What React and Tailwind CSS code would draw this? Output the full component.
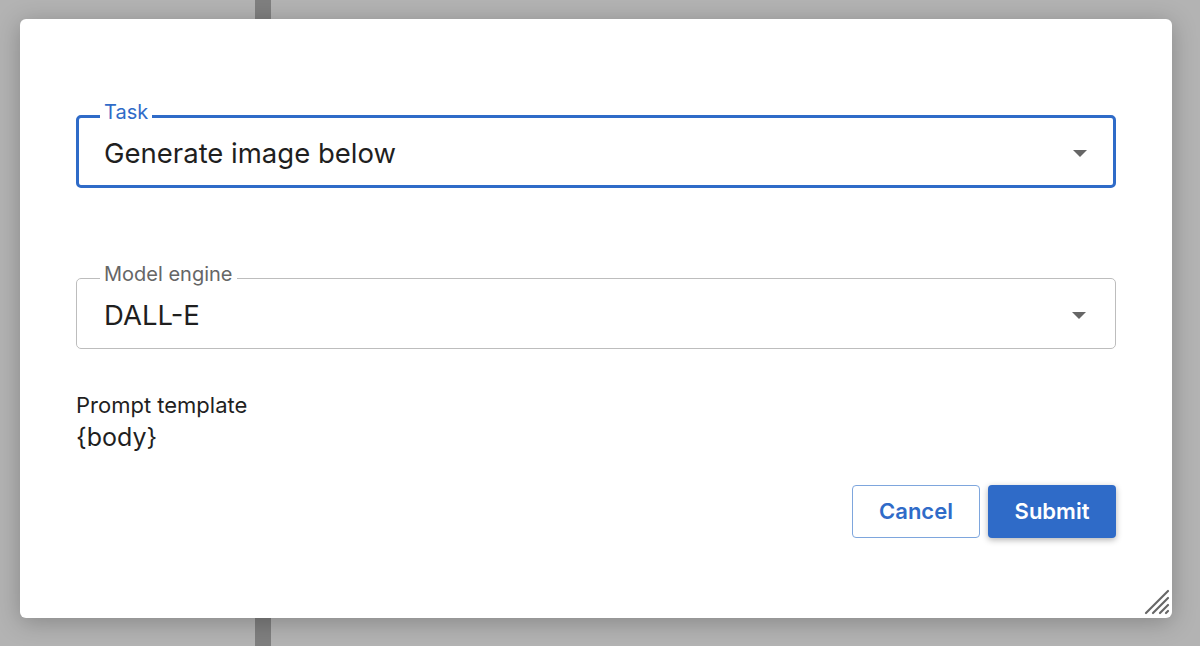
import { useState } from "react";

const font = { fontFamily: "Inter, 'Noto Sans', sans-serif" };

// MUI-style outlined select, drawn with a fieldset so the label sits in the notch
const OutlinedSelect = ({ label, value, focused }) => (
  <fieldset
    className={
      focused
        ? "rounded-[5px] border-[3px] border-[#2f6bc8] px-[21px]"
        : "rounded-[5px] border border-[#bdbdbd] px-[23px]"
    }
  >
    <legend
      className={
        focused
          ? "px-[4px] text-[20px] leading-[20px] text-[#2f6bc8]"
          : "px-[4px] text-[20px] leading-[20px] text-[#666666]"
      }
    >
      <span className="relative -top-[4px]">{label}</span>
    </legend>
    <div
      className={
        focused
          ? "flex items-center justify-between pt-[11px] pb-[16px] pl-[4px]"
          : "flex items-center justify-between pt-[11px] pb-[17px] pl-[4px]"
      }
    >
      <span className="text-[27.5px] leading-[32px] text-[#1f1f1f]">{value}</span>
      <svg width="14" height="7" viewBox="0 0 14 7" className={focused ? "mr-[5px]" : "mr-[6px]"}>
        <path d="M0 0 L14 0 L7 7 Z" fill="#666666" />
      </svg>
    </div>
  </fieldset>
);

export default function App() {
  const [task] = useState("Generate image below");
  const [engine] = useState("DALL-E");

  return (
    <div className="relative h-[646px] w-[1200px] overflow-hidden bg-[#b3b3b3]" style={font}>
      {/* page content behind the backdrop */}
      <div className="absolute left-[255px] top-0 h-full w-[16px] bg-[#7f7f7f]" />

      <div className="relative ml-[20px] pt-[19px]">
        <div className="relative h-[599px] w-[1152px] rounded-[6px] bg-white px-[56px] pt-[87px] shadow-[0_4px_24px_rgba(0,0,0,0.25)]">
          <OutlinedSelect label="Task" value={task} focused />

          <div className="mt-[80px]">
            <OutlinedSelect label="Model engine" value={engine} />
          </div>

          <div className="mt-[44px]">
            <div className="text-[22px] leading-[24px] text-[#1f1f1f]">Prompt template</div>
            <div className="mt-[5px] text-[25px] leading-[30px] text-[#1f1f1f]">{"{body}"}</div>
          </div>

          <div className="mt-[33px] flex justify-end gap-[8px]">
            <button className="h-[53px] w-[128px] rounded-[4px] border border-[#7ea6dd] bg-white text-[22px] font-semibold text-[#2f6bc8]">
              Cancel
            </button>
            <button className="h-[53px] w-[128px] rounded-[4px] bg-[#2f6bc8] text-[22px] font-semibold text-white shadow-[0_2px_6px_rgba(0,0,0,0.3)]">
              Submit
            </button>
          </div>

          {/* resize grip */}
          <svg
            width="26"
            height="26"
            viewBox="0 0 26 26"
            className="absolute bottom-[3px] right-[2px]"
          >
            <g stroke="#666666" strokeWidth="2.2" strokeLinecap="round">
              <line x1="2" y1="24" x2="24" y2="2" />
              <line x1="9" y1="24" x2="24" y2="9" />
              <line x1="16" y1="24" x2="24" y2="16" />
              <line x1="22" y1="24" x2="24" y2="22" />
            </g>
          </svg>
        </div>
      </div>
    </div>
  );
}
